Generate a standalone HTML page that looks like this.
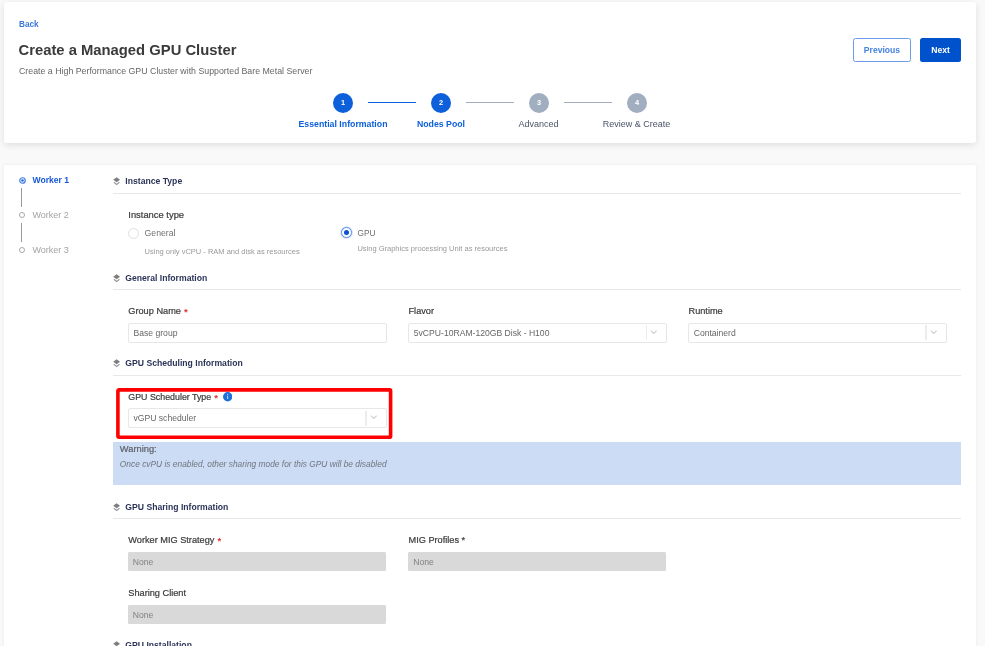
<!DOCTYPE html>
<html>
<head>
<meta charset="utf-8">
<title>Create a Managed GPU Cluster</title>
<style>
*{box-sizing:border-box;margin:0;padding:0}
html,body{width:985px;height:646px;overflow:hidden;background:#f9f9f9;font-family:"Liberation Sans",sans-serif;color:#333}
#root{position:absolute;left:0;top:0;width:985px;height:646px;will-change:transform}
.abs{position:absolute;white-space:nowrap;line-height:1}
.card{position:absolute;background:#fff;border-radius:3px;box-shadow:0 1px 4px rgba(0,0,0,.13)}
#hdr{left:4px;top:2px;width:972px;height:140.6px;box-shadow:0 2px 7px rgba(0,0,0,.11)}
#body{box-shadow:0 0 4px rgba(0,0,0,.06);left:4px;top:165px;width:972px;height:500px;border-radius:3px 3px 0 0}
.back{left:19px;top:20.5px;font-size:8.2px;font-weight:700;color:#3a78dc}
.title{left:18.5px;top:43.2px;font-size:14.8px;font-weight:700;color:#3a3a3a}
.sub{left:19px;top:66.6px;font-size:8.8px;color:#666}
.btn{position:absolute;top:37.6px;height:24.2px;border-radius:2.5px;font-size:8.6px;font-weight:700;text-align:center;line-height:25px}
.prev{left:853px;width:58px;border:1px solid #6c9ce6;color:#4583df;background:#fff;line-height:23px}
.next{left:920px;width:41px;background:#0052cc;color:#fff}
.sc{position:absolute;top:92.8px;width:20px;height:20px;border-radius:50%;color:#fff;font-size:7.4px;font-weight:700;text-align:center;line-height:20px}
.sc.on{background:#0d60da}
.sc.off{background:#a0aec0}
.sl{position:absolute;top:101.6px;height:1.3px;width:48px}
.sl.on{background:#0d60da}
.sl.off{background:#a0aec0}
.st{position:absolute;top:118.7px;width:120px;text-align:center;font-size:8.8px;line-height:10px;white-space:nowrap}
.st.on{color:#0d60da;font-weight:700;font-size:8.75px}
.st.off{color:#4a5568;font-size:9px}
.wk{font-size:8.6px;left:32.5px}
.wk.on{font-weight:700;color:#1558d6}
.wk.off{color:#a3a3a3;font-size:9px}
.vl{position:absolute;left:21px;width:1px;background:#9a9a9a}
.dot{position:absolute;left:18.9px;width:6px;height:6px;border-radius:50%;border:1px solid #a8a8a8;background:#fff}
.dot.on{border:1.3px solid #3b79e0;width:6.6px;height:6.6px;margin:-0.3px 0 0 -0.3px}
.dot.on:after{content:"";position:absolute;left:0.7px;top:0.7px;width:2.6px;height:2.6px;border-radius:50%;background:#1f63d8}
.sh{left:125.3px;font-size:8.65px;font-weight:700;color:#2b3358}
.hr{position:absolute;left:113px;width:848px;height:1px;background:#e8e8e8}
.ico{position:absolute;left:113.2px;width:7.3px;height:8.6px}
.lbl{font-size:9.2px;color:#3d3d3d;-webkit-text-stroke:0.22px #3d3d3d}
.req{color:#e03030;font-weight:700;font-size:9.6px;margin-left:0.5px;line-height:0;position:relative;top:1.2px;-webkit-text-stroke:0}
.inp{position:absolute;width:258.6px;height:20px;border:1px solid #e7e7e7;border-radius:2px;background:#fff;font-size:8.6px;color:#666;line-height:18.6px;padding-left:4.5px;white-space:nowrap}
.inp.dis{background:#d9d9d9;border-color:#d9d9d9;color:#808080;height:19px;width:258px;border-radius:1px;line-height:18.8px;padding-left:3.8px}
.sep{position:absolute;right:19px;top:1.6px;bottom:1.5px;width:1.4px;background:#ececec}
.chev{position:absolute;right:8.4px;top:6px;width:7.5px;height:4.4px}
.rad{position:absolute;width:11px;height:11px;border-radius:50%;border:1px solid #dfdfdf;background:#fff}
.rad.on{border-color:#5a8fe6;box-shadow:0 0 0 0.8px rgba(60,120,230,.25)}
.rad.on:after{content:"";position:absolute;left:2px;top:2px;width:5px;height:5px;border-radius:50%;background:#0b50d2}
.hint{font-size:7.5px;color:#999}
</style>
</head>
<body>
<div id="root">
<div class="card" id="hdr"></div>
<div class="card" id="body"></div>

<!-- header -->
<div class="abs back">Back</div>
<div class="abs title">Create a Managed GPU Cluster</div>
<div class="abs sub">Create a High Performance GPU Cluster with Supported Bare Metal Server</div>
<div class="btn prev">Previous</div>
<div class="btn next">Next</div>

<!-- stepper -->
<div class="sc on" style="left:333px">1</div>
<div class="sl on" style="left:368px"></div>
<div class="sc on" style="left:431px">2</div>
<div class="sl off" style="left:466px"></div>
<div class="sc off" style="left:529px">3</div>
<div class="sl off" style="left:564px"></div>
<div class="sc off" style="left:627px">4</div>
<div class="st on" style="left:283px">Essential Information</div>
<div class="st on" style="left:381px">Nodes Pool</div>
<div class="st off" style="left:478.5px">Advanced</div>
<div class="st off" style="left:576.5px">Review &amp; Create</div>

<!-- sidebar -->
<svg style="position:absolute;left:18.7px;top:176.6px;width:7px;height:7px" viewBox="0 0 7 7"><circle cx="3.5" cy="3.5" r="2.75" fill="#fff" stroke="#3f7de2" stroke-width="1.2"/><circle cx="3.5" cy="3.5" r="1.35" fill="#2e6fdc"/></svg>
<div class="abs wk on" style="top:176.4px">Worker 1</div>
<div class="vl" style="top:187.5px;height:19.5px"></div>
<div class="dot" style="top:211.8px"></div>
<div class="abs wk off" style="top:210.6px">Worker 2</div>
<div class="vl" style="top:222.5px;height:19.3px"></div>
<div class="dot" style="top:246.7px"></div>
<div class="abs wk off" style="top:245.6px">Worker 3</div>

<!-- section: Instance Type -->
<svg class="ico" style="top:177.20px" viewBox="0 0 8 9" preserveAspectRatio="none"><path d="M4 0.2 7.8 2.9 4 5.6 0.2 2.9Z" fill="#7e7e7e"/><path d="M0.9 5.5 4 7.9 7.1 5.5" fill="none" stroke="#9a9a9a" stroke-width="1.25"/></svg>
<div class="abs sh" style="top:177.10px">Instance Type</div>
<div class="hr" style="top:192.50px"></div>
<div class="abs lbl" style="left:128.3px;top:209.8px;font-size:9.4px">Instance type</div>
<div class="rad" style="left:128px;top:227.5px"></div>
<div class="abs lbl" style="left:144.6px;top:228.6px;color:#707070;font-size:8.7px;-webkit-text-stroke:0">General</div>
<div class="abs hint" style="left:144.6px;top:248px">Using only vCPU - RAM and disk as resources</div>
<div class="rad on" style="left:341.3px;top:227.2px"></div>
<div class="abs lbl" style="left:357.5px;top:228.7px;color:#707070;font-size:8.3px;-webkit-text-stroke:0">GPU</div>
<div class="abs hint" style="left:357.4px;top:245.2px">Using Graphics processing Unit as resources</div>

<!-- section: General Information -->
<svg class="ico" style="top:273.65px" viewBox="0 0 8 9" preserveAspectRatio="none"><path d="M4 0.2 7.8 2.9 4 5.6 0.2 2.9Z" fill="#7e7e7e"/><path d="M0.9 5.5 4 7.9 7.1 5.5" fill="none" stroke="#9a9a9a" stroke-width="1.25"/></svg>
<div class="abs sh" style="top:273.55px">General Information</div>
<div class="hr" style="top:288.90px"></div>
<div class="abs lbl" style="left:128.3px;top:307px">Group Name <span class="req">*</span></div>
<div class="inp" style="left:128px;top:322.7px">Base group</div>
<div class="abs lbl" style="left:408.5px;top:307px">Flavor</div>
<div class="inp" style="left:408.3px;top:322.7px">5vCPU-10RAM-120GB Disk - H100<span class="sep"></span><svg class="chev" viewBox="0 0 6 4"><path d="M0.4 0.6 3 3.2 5.6 0.6" fill="none" stroke="#d3d3d3" stroke-width="1.15"/></svg></div>
<div class="abs lbl" style="left:688.5px;top:307px">Runtime</div>
<div class="inp" style="left:688.2px;top:322.7px">Containerd<span class="sep"></span><svg class="chev" viewBox="0 0 6 4"><path d="M0.4 0.6 3 3.2 5.6 0.6" fill="none" stroke="#d3d3d3" stroke-width="1.15"/></svg></div>

<!-- section: GPU Scheduling Information -->
<svg class="ico" style="top:359.30px" viewBox="0 0 8 9" preserveAspectRatio="none"><path d="M4 0.2 7.8 2.9 4 5.6 0.2 2.9Z" fill="#7e7e7e"/><path d="M0.9 5.5 4 7.9 7.1 5.5" fill="none" stroke="#9a9a9a" stroke-width="1.25"/></svg>
<div class="abs sh" style="top:359.20px">GPU Scheduling Information</div>
<div class="hr" style="top:374.90px"></div>
<svg style="position:absolute;left:116px;top:388px;width:277px;height:52px" viewBox="0 0 277 52"><rect x="1.9" y="1.9" width="272.7" height="47.4" rx="1" ry="1" fill="none" stroke="#ff0000" stroke-width="3.6"/></svg>
<div class="abs lbl" style="left:128.3px;top:392.8px;font-size:8.85px">GPU Scheduler Type <span class="req">*</span></div>
<svg style="position:absolute;left:222.5px;top:392.2px;width:9.4px;height:9.4px" viewBox="0 0 9 9"><circle cx="4.5" cy="4.5" r="4.5" fill="#1f6fdc"/><rect x="4.1" y="3.8" width="0.8" height="2.9" fill="#fff" opacity=".9"/><circle cx="4.5" cy="2.5" r="0.55" fill="#fff" opacity=".9"/></svg>
<div class="inp" style="left:128px;top:408px;height:20px;line-height:18.6px">vGPU scheduler<span class="sep"></span><svg class="chev" viewBox="0 0 6 4"><path d="M0.4 0.6 3 3.2 5.6 0.6" fill="none" stroke="#d3d3d3" stroke-width="1.15"/></svg></div>

<!-- warning -->
<div style="position:absolute;left:113.4px;top:442.2px;width:847.6px;height:43.3px;background:#ccdcf4"></div>
<div class="abs" style="left:119.8px;top:445.4px;font-size:9.3px;color:#5c6068;-webkit-text-stroke:0.2px #5c6068">Warning:</div>
<div class="abs" style="left:119.8px;top:459.5px;font-size:8.38px;font-style:italic;color:#70757e">Once cvPU is enabled, other sharing mode for this GPU will be disabled</div>

<!-- section: GPU Sharing Information -->
<svg class="ico" style="top:502.60px" viewBox="0 0 8 9" preserveAspectRatio="none"><path d="M4 0.2 7.8 2.9 4 5.6 0.2 2.9Z" fill="#7e7e7e"/><path d="M0.9 5.5 4 7.9 7.1 5.5" fill="none" stroke="#9a9a9a" stroke-width="1.25"/></svg>
<div class="abs sh" style="top:502.50px">GPU Sharing Information</div>
<div class="hr" style="top:517.90px"></div>
<div class="abs lbl" style="left:128.3px;top:536px">Worker MIG Strategy <span class="req">*</span></div>
<div class="inp dis" style="left:128px;top:552px;height:19.4px">None</div>
<div class="abs lbl" style="left:408.5px;top:536px">MIG Profiles *</div>
<div class="inp dis" style="left:408.4px;top:552px;height:19.4px">None</div>
<div class="abs lbl" style="left:128.3px;top:589px">Sharing Client</div>
<div class="inp dis" style="left:128px;top:604.6px;height:19.4px">None</div>

<!-- section: GPU Installation (clipped) -->
<svg class="ico" style="top:641.20px" viewBox="0 0 8 9" preserveAspectRatio="none"><path d="M4 0.2 7.8 2.9 4 5.6 0.2 2.9Z" fill="#7e7e7e"/><path d="M0.9 5.5 4 7.9 7.1 5.5" fill="none" stroke="#9a9a9a" stroke-width="1.25"/></svg>
<div class="abs sh" style="top:641.10px">GPU Installation</div>
</div>
</body>
</html>
